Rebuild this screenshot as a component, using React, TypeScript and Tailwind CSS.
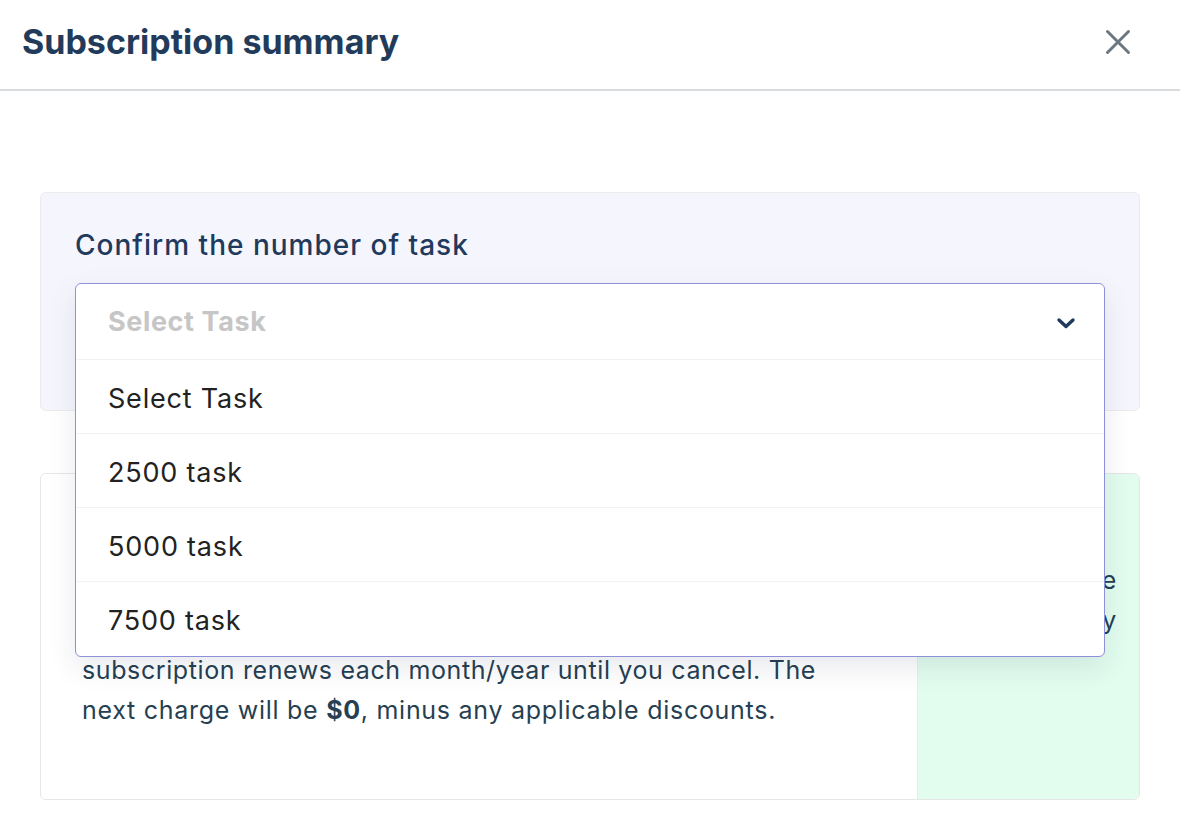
import { useState } from "react";

const TASK_OPTIONS = ["Select Task", "2500 task", "5000 task", "7500 task"];

const ChevronDown = () => (
  <svg width="22" height="22" viewBox="0 0 22 22" fill="none">
    <path d="M4 8 L11 14.5 L18 8" stroke="#1f3a5a" strokeWidth="3.4" strokeLinecap="round" strokeLinejoin="round" />
  </svg>
);

const CloseIcon = () => (
  <svg width="26" height="26" viewBox="0 0 26 26" fill="none">
    <path d="M2.5 2.5 L23.5 23.5 M23.5 2.5 L2.5 23.5" stroke="#6b7882" strokeWidth="3" strokeLinecap="round" />
  </svg>
);

const TaskSelect = () => {
  const [isOpen] = useState<boolean>(true);

  return (
    <div className="relative h-[77px]">
      <div className="absolute left-0 right-0 top-0 z-10 overflow-hidden rounded-md border border-[#8e90da] bg-white shadow-[0_10px_28px_rgba(30,40,80,0.10)]">
        <div className="flex h-[76px] items-center justify-between border-b border-[#f2f2f2] pl-[32px] pr-[27px] pt-[2px]">
          <span className="text-[27px] font-bold tracking-[0.6px] text-[#c6c6c6]">Select Task</span>
          <ChevronDown />
        </div>
        {isOpen &&
          TASK_OPTIONS.map((option, i) => (
            <div
              key={option}
              className={
                "flex h-[74px] items-center pl-[32px] pt-[5px] text-[27px] tracking-[0.8px] text-[#222222] " +
                (i < TASK_OPTIONS.length - 1 ? "border-b border-[#f3f3f3]" : "")
              }
            >
              {option}
            </div>
          ))}
      </div>
    </div>
  );
};

export default function App() {
  return (
    <div className="min-h-[822px] w-[1180px] bg-white font-['Inter',sans-serif]">
      {/* header */}
      <div className="flex h-[91px] items-center justify-between border-b-2 border-[#d8dcdf] pb-[6px] pl-[22px] pr-[49px]">
        <h1 className="text-[34px] font-bold text-[#233b5b]">Subscription summary</h1>
        <button className="flex items-center justify-center">
          <CloseIcon />
        </button>
      </div>

      <div className="px-[40px] pt-[101px]">
        {/* confirm card */}
        <div className="rounded-md border border-[#ebebee] bg-[#f5f6fd] px-[34px] pb-[50px] pt-[34px]">
          <div className="mb-[20px] text-[28px] font-medium leading-[36px] tracking-[1px] text-[#1f3a5c]">
            Confirm the number of task
          </div>
          <TaskSelect />
        </div>

        {/* summary card */}
        <div className="mt-[62px] flex overflow-hidden rounded-md border border-[#e6e6e6]">
          <div className="w-[877px] border-r border-[#ececec] bg-white pb-[69px] pl-[41px] pr-[101px] pt-[56px] text-[25px] leading-[40px] tracking-[0.6px] text-[#263f52]">
            <div className="whitespace-nowrap text-justify [text-align-last:justify]">By confirming your subscription, you allow us to charge</div>
            <div className="whitespace-nowrap text-justify [text-align-last:justify]">your card for this payment and future payments in</div>
            <div className="whitespace-nowrap text-justify [text-align-last:justify]">accordance with our terms. You may cancel anytime. Your</div>
            <div className="whitespace-nowrap text-justify [text-align-last:justify]">subscription renews each month/year until you cancel. The</div>
            <div className="whitespace-nowrap tracking-[0.72px]">
              next charge will be <span className="font-bold">$0</span>, minus any applicable discounts.
            </div>
          </div>
          <div className="flex-1 bg-[#e2fdee] pr-[22px] pt-[86px] text-right text-[25px] leading-[40px] tracking-[0.6px] text-[#263f52]">
            <div>Total due</div>
            <div>monthly</div>
          </div>
        </div>
      </div>
    </div>
  );
}
